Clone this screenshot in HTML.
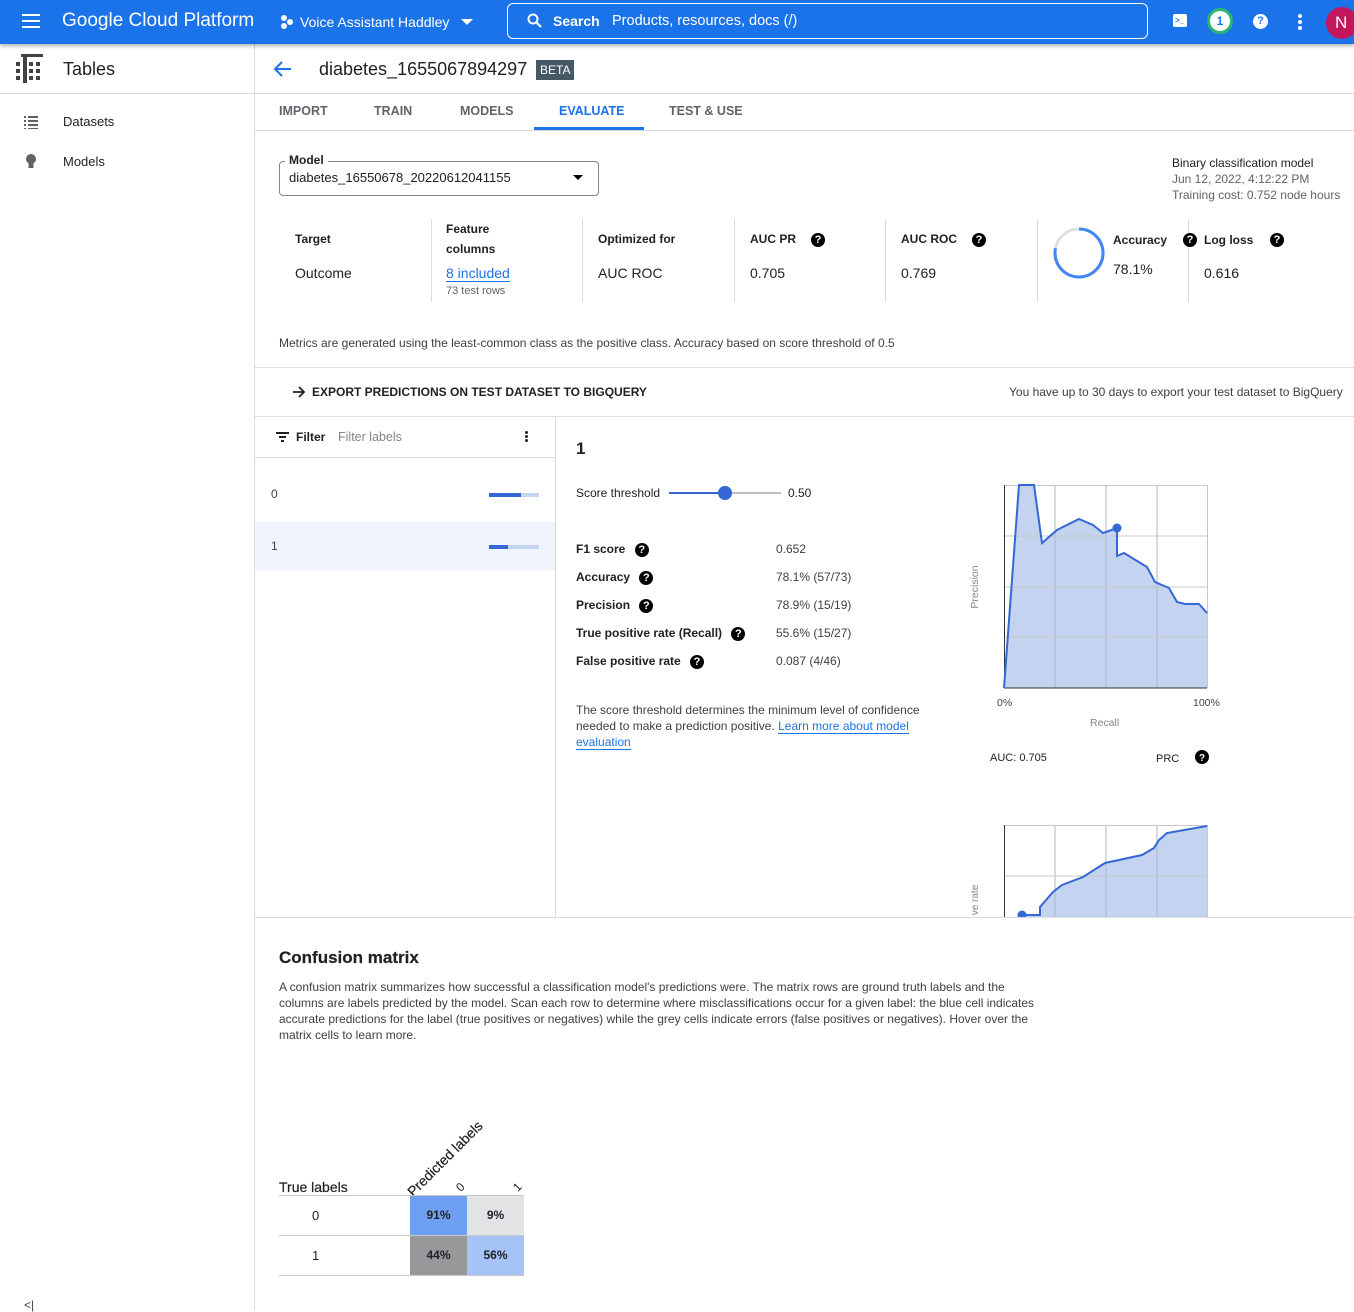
<!DOCTYPE html>
<html><head><meta charset="utf-8">
<style>
*{box-sizing:border-box;margin:0;padding:0}
body{width:1354px;height:1310px;overflow:hidden;font-family:"Liberation Sans",Arial,sans-serif;color:#202124;background:#fff;position:relative}
.a{position:absolute;white-space:nowrap}
.b{font-weight:bold}
.q{display:inline-block;width:14px;height:14px;border-radius:50%;background:#000;color:#fff;font-size:11px;font-weight:bold;text-align:center;line-height:14px;vertical-align:middle}
.hl{position:absolute;height:1px;background:#dadce0}
.vl{position:absolute;width:1px;background:#dadce0}
.s12{font-size:12px}.s13{font-size:13px}.s14{font-size:14px}
.tab{font-size:12.5px}
</style></head><body>
<div class="a" style="left:0;top:0;width:1354px;height:44px;background:#1a73e8;box-shadow:0 2px 4px rgba(0,0,0,.3);z-index:2">
  <div class="a" style="left:22px;top:14px;width:18px;height:2px;background:#fff;box-shadow:0 6px 0 #fff,0 12px 0 #fff"></div>
  <div class="a" style="left:62px;top:10px;color:#fff;font-size:19px">Google Cloud Platform</div>
  <div class="a" style="left:281px;top:15px;width:6px;height:6px;border-radius:50%;background:#fff;box-shadow:6px 4px 0 #fff,0 8px 0 #fff"></div>
  <div class="a" style="left:300px;top:14px;color:#fff;font-size:14px">Voice Assistant Haddley</div>
  <div class="a" style="left:461px;top:19px;border-left:6px solid transparent;border-right:6px solid transparent;border-top:6px solid #fff"></div>
  <div class="a" style="left:507px;top:3px;width:641px;height:36px;border:1px solid #fff;border-radius:6px"></div>
  <svg class="a" style="left:527px;top:13px" width="16" height="16"><circle cx="6" cy="6" r="4.5" stroke="#fff" stroke-width="2" fill="none"/><line x1="9.5" y1="9.5" x2="14" y2="14" stroke="#fff" stroke-width="2.2"/></svg>
  <div class="a b" style="left:553px;top:13px;color:#fff;font-size:14px">Search</div>
  <div class="a" style="left:612px;top:13px;color:#fff;font-size:14.5px">Products, resources, docs (/)</div>
  <div class="a" style="left:1173px;top:14px;width:14px;height:13px;background:#fff;border-radius:2px;font-size:8px;color:#1a73e8;font-weight:bold;line-height:13px;padding-left:2px">&gt;_</div>
  <div class="a" style="left:1207px;top:8px;width:26px;height:26px;border-radius:50%;background:#1e8e3e;border:3px solid #2bb673"></div>
  <div class="a b" style="left:1210px;top:11px;width:20px;height:20px;border-radius:50%;background:#fff;color:#1a73e8;font-size:12px;text-align:center;line-height:20px">1</div>
  <div class="a b" style="left:1253px;top:14px;width:15px;height:15px;border-radius:50%;background:#fff;color:#1a73e8;font-size:11px;text-align:center;line-height:15px">?</div>
  <div class="a" style="left:1298px;top:14px;width:4px;height:4px;border-radius:50%;background:#fff;box-shadow:0 6px 0 #fff,0 12px 0 #fff"></div>
  <div class="a" style="left:1326px;top:7px;width:32px;height:32px;border-radius:50%;background:#c2185b;color:#fff;font-size:17px;line-height:32px;padding-left:9px">N</div>
</div>
<div class="vl" style="left:254px;top:44px;height:1266px"></div>
<div class="hl" style="left:0;top:93px;width:254px"></div>
<svg class="a" style="left:15px;top:53px" width="30" height="32" fill="#424242"><rect x="6" y="1" width="22" height="3"/><rect x="8" y="4" width="4" height="26"/><rect x="1" y="9" width="4" height="4"/><rect x="14" y="9" width="4" height="4"/><rect x="21" y="9" width="4" height="4"/><rect x="1" y="16" width="4" height="4"/><rect x="14" y="16" width="4" height="4"/><rect x="21" y="16" width="4" height="4"/><rect x="1" y="23" width="4" height="4"/><rect x="14" y="23" width="4" height="4"/><rect x="21" y="23" width="4" height="4"/></svg>
<div class="a" style="left:63px;top:59px;font-size:18px">Tables</div>
<svg class="a" style="left:24px;top:115px" width="14" height="14" fill="#5f6368"><rect x="0" y="1" width="2" height="2"/><rect x="4" y="1" width="10" height="2"/><rect x="0" y="5" width="2" height="2"/><rect x="4" y="5" width="10" height="2"/><rect x="0" y="9" width="2" height="2"/><rect x="4" y="9" width="10" height="2"/><rect x="0" y="13" width="2" height="1"/><rect x="4" y="13" width="10" height="1"/></svg>
<div class="a s13" style="left:63px;top:114px">Datasets</div>
<svg class="a" style="left:25px;top:154px" width="12" height="16" fill="#5f6368"><circle cx="6" cy="5" r="5"/><rect x="3.5" y="9" width="5" height="5"/></svg>
<div class="a s13" style="left:63px;top:154px">Models</div>
<div class="a s12" style="left:24px;top:1298px;color:#444">&lt;|</div>
<div class="hl" style="left:255px;top:93px;width:1099px"></div>
<svg class="a" style="left:273px;top:60px" width="20" height="18"><path d="M18 9H3M9 2L2 9l7 7" stroke="#1a73e8" stroke-width="2" fill="none"/></svg>
<div class="a" style="left:319px;top:59px;font-size:18px">diabetes_1655067894297</div>
<div class="a" style="left:536px;top:60px;background:#455a64;color:#fff;font-size:12px;padding:3px 4px">BETA</div>
<div class="a tab b" style="left:279px;top:104px;color:#5f6368">IMPORT</div>
<div class="a tab b" style="left:374px;top:104px;color:#5f6368">TRAIN</div>
<div class="a tab b" style="left:460px;top:104px;color:#5f6368">MODELS</div>
<div class="a tab b" style="left:559px;top:104px;color:#1a73e8">EVALUATE</div>
<div class="a tab b" style="left:669px;top:104px;color:#5f6368">TEST &amp; USE</div>
<div class="a" style="left:534px;top:127px;width:110px;height:3px;background:#1a73e8"></div>
<div class="hl" style="left:255px;top:130px;width:1099px"></div>
<div class="a" style="left:279px;top:161px;width:320px;height:35px;border:1px solid #80868b;border-radius:4px"></div>
<div class="a s12 b" style="left:285px;top:153px;background:#fff;padding:0 4px">Model</div>
<div class="a s13" style="left:289px;top:170px">diabetes_16550678_20220612041155</div>
<div class="a" style="left:573px;top:175px;border-left:5px solid transparent;border-right:5px solid transparent;border-top:5px solid #000"></div>
<div class="a s12" style="left:1172px;top:156px">Binary classification model</div>
<div class="a s12" style="left:1172px;top:172px;color:#5f6368">Jun 12, 2022, 4:12:22 PM</div>
<div class="a s12" style="left:1172px;top:188px;color:#5f6368">Training cost: 0.752 node hours</div>
<div class="vl" style="left:431px;top:219px;height:83px"></div>
<div class="vl" style="left:582px;top:219px;height:83px"></div>
<div class="vl" style="left:734px;top:219px;height:83px"></div>
<div class="vl" style="left:885px;top:219px;height:83px"></div>
<div class="vl" style="left:1037px;top:219px;height:83px"></div>
<div class="vl" style="left:1188px;top:219px;height:83px"></div>
<div class="a s12 b" style="left:295px;top:232px">Target</div>
<div class="a s14" style="left:295px;top:265px">Outcome</div>
<div class="a s12 b" style="left:446px;top:219px;line-height:20px">Feature<br>columns</div>
<div class="a s14" style="left:446px;top:265px;color:#1a73e8;border-bottom:1px solid #1a73e8">8 included</div>
<div class="a" style="left:446px;top:285px;font-size:11px;color:#5f6368">73 test rows</div>
<div class="a s12 b" style="left:598px;top:232px">Optimized for</div>
<div class="a s14" style="left:598px;top:265px">AUC ROC</div>
<div class="a s12 b" style="left:750px;top:232px">AUC PR</div><div class="a" style="left:811px;top:231px"><span class="q">?</span></div>
<div class="a s14" style="left:750px;top:265px">0.705</div>
<div class="a s12 b" style="left:901px;top:232px">AUC ROC</div><div class="a" style="left:972px;top:231px"><span class="q">?</span></div>
<div class="a s14" style="left:901px;top:265px">0.769</div>
<svg class="a" style="left:1052px;top:226px" width="54" height="54"><circle cx="27" cy="27" r="24" stroke="#e0e0e0" stroke-width="3" fill="none"/><circle cx="27" cy="27" r="24" stroke="#4285f4" stroke-width="3" fill="none" stroke-dasharray="117.8 150.8" transform="rotate(-90 27 27)"/></svg>
<div class="a s12 b" style="left:1113px;top:233px">Accuracy</div><div class="a" style="left:1183px;top:231px"><span class="q">?</span></div>
<div class="a s14" style="left:1113px;top:261px">78.1%</div>
<div class="a s12 b" style="left:1204px;top:233px">Log loss</div><div class="a" style="left:1270px;top:231px"><span class="q">?</span></div>
<div class="a s14" style="left:1204px;top:265px">0.616</div>
<div class="a s12" style="left:279px;top:336px;color:#3c4043">Metrics are generated using the least-common class as the positive class. Accuracy based on score threshold of 0.5</div>
<div class="hl" style="left:255px;top:367px;width:1099px"></div>
<svg class="a" style="left:292px;top:385px" width="14" height="14"><path d="M1 7h11M7 2l5 5-5 5" stroke="#202124" stroke-width="1.8" fill="none"/></svg>
<div class="a s12 b" style="left:312px;top:385px">EXPORT PREDICTIONS ON TEST DATASET TO BIGQUERY</div>
<div class="a s12" style="left:1009px;top:385px;color:#3c4043">You have up to 30 days to export your test dataset to BigQuery</div>
<div class="hl" style="left:255px;top:416px;width:1099px"></div>
<div class="vl" style="left:555px;top:417px;height:500px"></div>
<div class="a" style="left:276px;top:432px;width:13px;height:2px;background:#202124"></div>
<div class="a" style="left:279px;top:436px;width:7px;height:2px;background:#202124"></div>
<div class="a" style="left:281px;top:440px;width:3px;height:2px;background:#202124"></div>
<div class="a s12 b" style="left:296px;top:430px">Filter</div>
<div class="a s12" style="left:338px;top:430px;color:#80868b;font-size:12.5px">Filter labels</div>
<div class="a" style="left:525px;top:431px;width:3px;height:3px;border-radius:50%;background:#202124;box-shadow:0 4px 0 #202124,0 8px 0 #202124"></div>
<div class="hl" style="left:255px;top:457px;width:300px"></div>
<div class="a s12" style="left:271px;top:487px;color:#3c4043">0</div>
<div class="a" style="left:489px;top:493px;width:50px;height:4px;background:#c5d4f0"></div>
<div class="a" style="left:489px;top:493px;width:32px;height:4px;background:#3367d6"></div>
<div class="a" style="left:255px;top:522px;width:300px;height:48px;background:#eff4fd"></div>
<div class="a s12" style="left:271px;top:539px;color:#3c4043">1</div>
<div class="a" style="left:489px;top:545px;width:50px;height:4px;background:#c5d4f0"></div>
<div class="a" style="left:489px;top:545px;width:19px;height:4px;background:#3367d6"></div>
<div class="a b" style="left:576px;top:439px;font-size:17px">1</div>
<div class="a s12" style="left:576px;top:486px">Score threshold</div>
<div class="a" style="left:669px;top:492px;width:112px;height:2px;background:#bdbdbd"></div>
<div class="a" style="left:669px;top:492px;width:56px;height:2px;background:#3367d6"></div>
<div class="a" style="left:718px;top:486px;width:14px;height:14px;border-radius:50%;background:#3367d6"></div>
<div class="a s12" style="left:788px;top:486px">0.50</div>
<div class="a s12 b" style="left:576px;top:542px">F1 score <span class="q" style="margin-left:6px">?</span></div>
<div class="a s12 b" style="left:576px;top:570px">Accuracy <span class="q" style="margin-left:6px">?</span></div>
<div class="a s12 b" style="left:576px;top:598px">Precision <span class="q" style="margin-left:6px">?</span></div>
<div class="a s12 b" style="left:576px;top:626px">True positive rate (Recall) <span class="q" style="margin-left:6px">?</span></div>
<div class="a s12 b" style="left:576px;top:654px">False positive rate <span class="q" style="margin-left:6px">?</span></div>
<div class="a s12" style="left:776px;top:542px;color:#3c4043">0.652</div>
<div class="a s12" style="left:776px;top:570px;color:#3c4043">78.1% (57/73)</div>
<div class="a s12" style="left:776px;top:598px;color:#3c4043">78.9% (15/19)</div>
<div class="a s12" style="left:776px;top:626px;color:#3c4043">55.6% (15/27)</div>
<div class="a s12" style="left:776px;top:654px;color:#3c4043">0.087 (4/46)</div>
<div class="a s12" style="left:576px;top:702px;color:#3c4043;line-height:16px;white-space:normal;width:350px">The score threshold determines the minimum level of confidence needed to make a prediction positive. <span style="color:#1a73e8;border-bottom:1px solid #1a73e8">Learn more about model</span> <span style="color:#1a73e8;border-bottom:1px solid #1a73e8">evaluation</span></div>
<svg class="a" style="left:960px;top:470px" width="280" height="447">
 <g transform="translate(-960,-470)">
  <polygon points="1004,688 1019,485 1034,485 1042,543 1057,530 1079,519 1093,525 1103,533 1117,528 1117,556 1124,553 1147,567 1155,582 1169,588 1177,602 1185,604 1199,604 1207,613 1207,688" fill="#c4d3f0"/>
  <g stroke="#c8c8c8" stroke-width="1"><line x1="1055" y1="485" x2="1055" y2="688" stroke="#a8b4cc"/><line x1="1106" y1="485" x2="1106" y2="688" stroke="#a8b4cc"/><line x1="1157" y1="485" x2="1157" y2="688" stroke="#a8b4cc"/>
  <line x1="1004" y1="485.5" x2="1207" y2="485.5"/><line x1="1004" y1="536" x2="1207" y2="536"/><line x1="1004" y1="587" x2="1207" y2="587"/><line x1="1004" y1="637" x2="1207" y2="637"/><line x1="1207.5" y1="485" x2="1207.5" y2="688"/></g>
  <line x1="1004.5" y1="485" x2="1004.5" y2="688" stroke="#333"/><line x1="1004" y1="688" x2="1207" y2="688" stroke="#333"/>
  <polyline points="1004,688 1019,485 1034,485 1042,543 1057,530 1079,519 1093,525 1103,533 1117,528 1117,556 1124,553 1147,567 1155,582 1169,588 1177,602 1185,604 1199,604 1207,613" fill="none" stroke="#3367d6" stroke-width="2"/>
  <circle cx="1117" cy="528" r="4.5" fill="#3367d6"/>
  <text x="978" y="587" font-size="10.5" fill="#80868b" transform="rotate(-90 978 587)" text-anchor="middle" font-family="Liberation Sans">Precision</text>
  <text x="997" y="706" font-size="10.5" fill="#444" font-family="Liberation Sans">0%</text>
  <text x="1193" y="706" font-size="10.5" fill="#444" font-family="Liberation Sans">100%</text>
  <text x="1090" y="726" font-size="10.5" fill="#80868b" font-family="Liberation Sans">Recall</text>
  <text x="990" y="761" font-size="11" fill="#202124" font-family="Liberation Sans">AUC: 0.705</text>
  <text x="1156" y="762" font-size="11" fill="#202124" font-family="Liberation Sans">PRC</text>
  <circle cx="1202" cy="757" r="7" fill="#000"/><text x="1202" y="761" font-size="10" fill="#fff" font-weight="bold" text-anchor="middle" font-family="Liberation Sans">?</text>
  <polygon points="1022,917 1022,915 1040,915 1040,907 1053,892 1062,885 1083,877 1105,863 1142,855 1154,848 1159,840 1167,833 1207,826 1207,917" fill="#c4d3f0"/>
  <g stroke="#c8c8c8"><line x1="1055" y1="825" x2="1055" y2="917" stroke="#a8b4cc"/><line x1="1106" y1="825" x2="1106" y2="917" stroke="#a8b4cc"/><line x1="1157" y1="825" x2="1157" y2="917" stroke="#a8b4cc"/><line x1="1004" y1="825.5" x2="1207" y2="825.5"/><line x1="1004" y1="876" x2="1207" y2="876"/><line x1="1207.5" y1="825" x2="1207.5" y2="917"/></g>
  <line x1="1004.5" y1="825" x2="1004.5" y2="917" stroke="#333"/>
  <polyline points="1022,915 1040,915 1040,907 1053,892 1062,885 1083,877 1105,863 1142,855 1154,848 1159,840 1167,833 1207,826" fill="none" stroke="#3367d6" stroke-width="2"/>
  <circle cx="1022" cy="915" r="4.5" fill="#3367d6"/>
  <text x="978" y="900" font-size="10" fill="#80868b" transform="rotate(-90 978 900)" text-anchor="middle" font-family="Liberation Sans">ve rate</text>
 </g>
</svg>
<div class="hl" style="left:255px;top:917px;width:1099px"></div>
<div class="a" style="left:279px;top:948px;font-size:17px;font-weight:600;-webkit-text-stroke:0.2px #202124">Confusion matrix</div>
<div class="a s12" style="left:279px;top:979px;color:#3c4043;line-height:16px;white-space:normal;width:760px">A confusion matrix summarizes how successful a classification model's predictions were. The matrix rows are ground truth labels and the columns are labels predicted by the model. Scan each row to determine where misclassifications occur for a given label: the blue cell indicates accurate predictions for the label (true positives or negatives) while the grey cells indicate errors (false positives or negatives). Hover over the matrix cells to learn more.</div>
<div class="a s14" style="left:279px;top:1179px;-webkit-text-stroke:0.2px #202124">True labels</div>
<div class="a s14" style="transform:rotate(-45deg);transform-origin:0 0;left:404px;top:1188px;-webkit-text-stroke:0.2px #202124">Predicted labels</div>
<div class="a s12" style="left:457px;top:1180px;transform:rotate(-45deg)">0</div>
<div class="a s12" style="left:514px;top:1180px;transform:rotate(-45deg)">1</div>
<div class="hl" style="left:279px;top:1195px;width:245px;background:#c8c8c8"></div>
<div class="hl" style="left:279px;top:1235px;width:245px;background:#c8c8c8"></div>
<div class="hl" style="left:279px;top:1275px;width:245px;background:#c8c8c8"></div>
<div class="a s13" style="left:312px;top:1208px">0</div>
<div class="a s13" style="left:312px;top:1248px">1</div>
<div class="a s12 b" style="left:410px;top:1196px;width:57px;height:39px;background:#6ea0f2;text-align:center;line-height:39px">91%</div>
<div class="a s12 b" style="left:467px;top:1196px;width:57px;height:39px;background:#e2e3e5;text-align:center;line-height:39px">9%</div>
<div class="a s12 b" style="left:410px;top:1236px;width:57px;height:39px;background:#97989a;text-align:center;line-height:39px">44%</div>
<div class="a s12 b" style="left:467px;top:1236px;width:57px;height:39px;background:#a5c3f7;text-align:center;line-height:39px">56%</div>
</body></html>
